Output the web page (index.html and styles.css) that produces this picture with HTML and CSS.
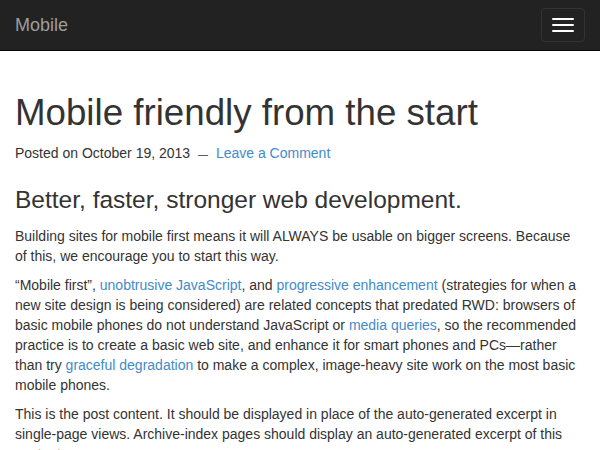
FILE: index.html
```html
<!DOCTYPE html>
<html>
<head>
<meta charset="utf-8">
<link rel="stylesheet" href="styles.css">
</head>
<body>
<nav class="navbar">
  <a class="brand" href="#">Mobile</a>
  <button class="toggle" type="button" aria-label="Toggle navigation">
    <span class="bar"></span>
    <span class="bar"></span>
    <span class="bar"></span>
  </button>
</nav>
<main class="container">
  <h1 class="title">Mobile friendly from the start</h1>
  <p class="meta">Posted on October 19, 2013 <span class="sep">—</span> <a href="#">Leave a Comment</a></p>
  <h2 class="subtitle">Better, faster, stronger web development.</h2>
  <p>Building sites for mobile first means it will ALWAYS be usable on bigger screens. Because of this, we encourage you to start this way.</p>
  <p>“Mobile first”, <a href="#">unobtrusive JavaScript</a>, and <a href="#">progressive enhancement</a> (strategies for when a new site design is being considered) are related concepts that predated RWD: browsers of basic mobile phones do not understand JavaScript or <a href="#">media queries</a>, so the recommended practice is to create a basic web site, and enhance it for smart phones and PCs—rather than try <a href="#">graceful degradation</a> to make a complex, image-heavy site work on the most basic mobile phones.</p>
  <p>This is the post content. It should be displayed in place of the auto-generated excerpt in single-page views. Archive-index pages should display an auto-generated excerpt of this content.</p>
</main>
</body>
</html>
```
FILE: styles.css
```css
* { box-sizing: border-box; }
html, body { margin: 0; padding: 0; }
body {
  font-family: "Liberation Sans", Arial, sans-serif;
  font-size: 14px;
  line-height: 20px;
  color: #333;
  background: #fff;
  overflow: hidden;
}
a { color: #428bca; text-decoration: none; }
.navbar {
  height: 51px;
  background: #222;
  border-bottom: 1px solid #080808;
  display: flex;
  align-items: center;
  justify-content: space-between;
  padding: 0 15px;
}
.brand {
  color: #9d9d9d;
  font-size: 18px;
  line-height: 20px;
}
.toggle {
  width: 44px;
  height: 34px;
  margin-top: -1px;
  background: transparent;
  border: 1px solid #333;
  border-radius: 4px;
  padding: 9px 10px;
  display: flex;
  flex-direction: column;
  justify-content: space-between;
  align-items: center;
}
.bar {
  display: block;
  width: 22px;
  height: 2px;
  border-radius: 1px;
  background: #fff;
}
.container { padding: 22px 15px 0; }
.title {
  font-size: 36.7px;
  font-weight: 500;
  line-height: 40px;
  margin: 20px 0 10px;
}
.meta { margin: 0 0 10px; }
.sep { font-size: 10px; margin: 0 4px; }
.subtitle {
  font-size: 24.5px;
  font-weight: 500;
  line-height: 27px;
  margin: 21px 0 13px;
}
p { margin: 0 0 9px; }
```
